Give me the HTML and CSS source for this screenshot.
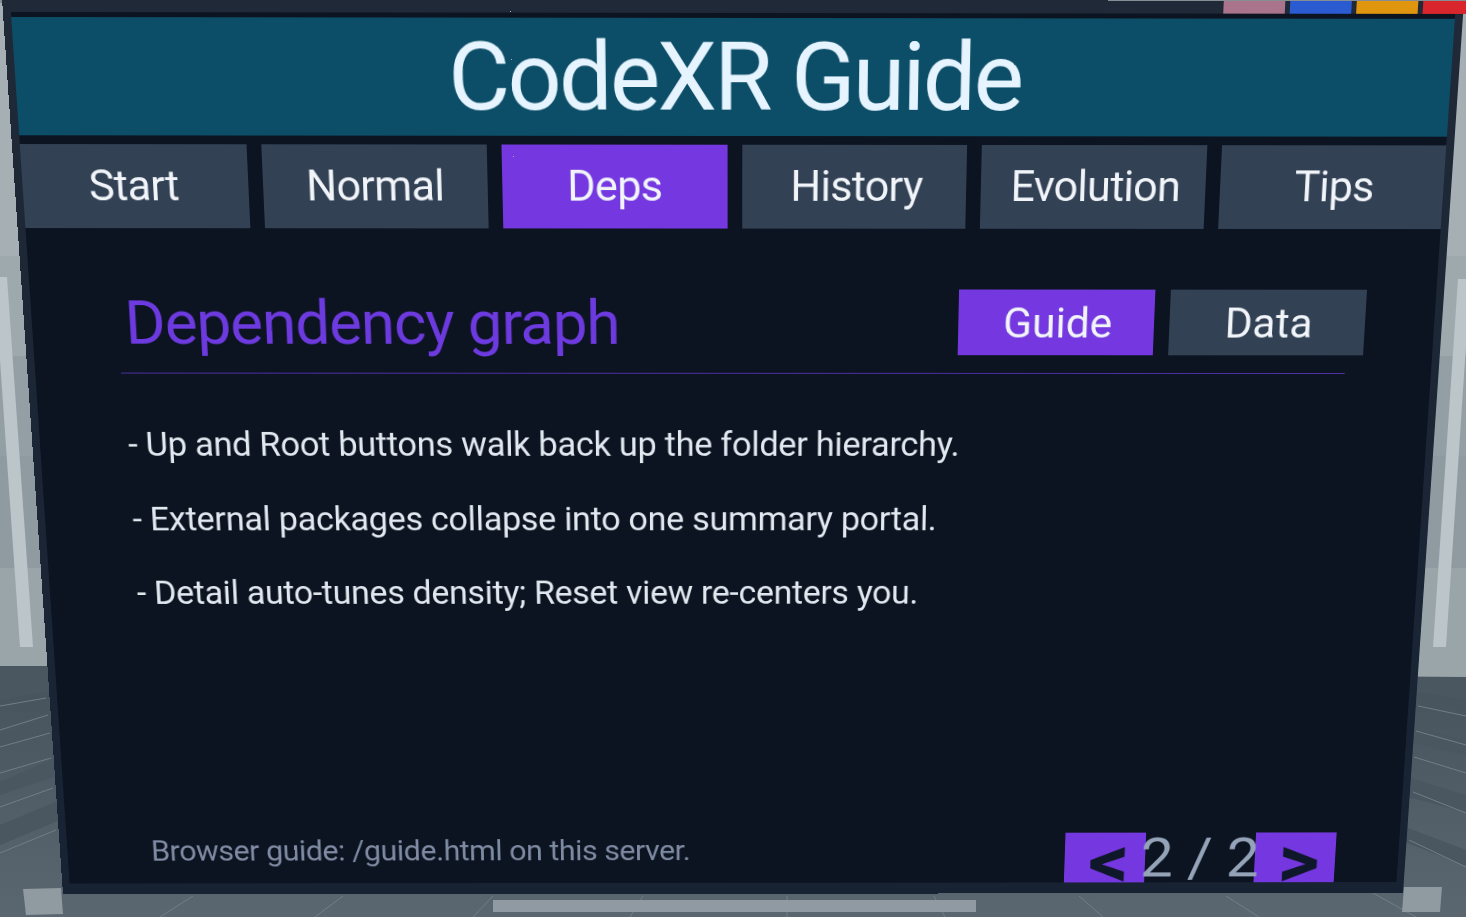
FILE: index.html
```html
<!DOCTYPE html>
<html lang="en">
<head>
<meta charset="utf-8">
<title>CodeXR Guide</title>
<link rel="stylesheet" href="styles.css">
</head>
<body>
<div class="scene">
  <svg class="backdrop" viewBox="0 0 1466 917" width="1466" height="917" aria-hidden="true">
    <defs>
      <linearGradient id="floorShade" x1="0" y1="0" x2="0" y2="1">
        <stop offset="0" stop-color="#46525b"/>
        <stop offset="1" stop-color="#5a6771"/>
      </linearGradient>
    </defs>
    <rect class="wall-a" x="0" y="0" width="1466" height="256"/>
    <rect class="wall-b" x="0" y="256" width="1466" height="100"/>
    <rect class="wall-c" x="0" y="356" width="1466" height="100"/>
    <rect class="wall-d" x="0" y="456" width="1466" height="112"/>
    <rect class="wall-e" x="0" y="568" width="1466" height="110"/>
    <rect class="wall-top" x="0" y="0" width="1466" height="3"/>
    <polygon class="floor" points="0,666 1466,677 1466,917 0,917"/>
    <polygon class="floor-dark" points="0,666 60,666 60,690 0,700"/>
    <polygon class="floor-dark" points="0,735 60,718 60,730 0,748"/>
    <polygon class="floor-dark" points="0,782 60,756 60,775 0,795"/>
    <polygon class="floor-dark" points="0,825 60,800 60,820 0,845"/>
    <polygon class="floor-dark" points="1400,677 1466,677 1466,700 1400,690"/>
    <polygon class="floor-dark" points="1400,725 1466,740 1466,755 1400,740"/>
    <polygon class="floor-dark" points="1400,775 1466,795 1466,812 1400,795"/>
    <polygon class="floor-dark" points="1400,825 1466,850 1466,866 1400,840"/>
    <g class="tile">
      <path d="M0 853L56 830M0 807L53 788M0 773L51 758M0 747L50 733M0 730L48 715M0 706L46 698M25 912L62 890"/>
      <path d="M1409 840L1466 867M1413 792L1466 813M1414 757L1466 773M1416 731L1466 745M1418 706L1466 716"/>
      <path d="M193 896L160 917M343 896L315 917M493 896L473 917M643 896L630 917M787 896L787 917M934 896L945 917M1079 896L1103 917M1226 896L1259 917M1373 893L1416 917"/>
    </g>
    <polygon class="wall-bar" points="0,277 7,277 33,647 20,647 0,360"/>
    <polygon class="wall-bar" points="1458,279 1466,279 1466,345 1446,647 1433,647"/>
    <polygon class="handle" points="23,889 61,888 63,914 26,915"/>
    <polygon class="handle" points="1404,887 1442,887 1440,912 1402,912"/>
    <rect class="grab-bar" x="493" y="900" width="483" height="12"/>
  </svg>

  <main class="panel">
    <div class="controls">
      <span class="control control-pink"></span>
      <span class="control control-blue"></span>
      <span class="control control-amber"></span>
      <span class="control control-red"></span>
    </div>
    <div class="surface">
      <header class="banner">CodeXR Guide</header>
      <nav class="tabs">
        <a class="tab">Start</a>
        <a class="tab">Normal</a>
        <a class="tab is-active">Deps</a>
        <a class="tab">History</a>
        <a class="tab">Evolution</a>
        <a class="tab">Tips</a>
      </nav>
      <section class="content">
        <div class="content-head">
          <h1 class="content-title">Dependency graph</h1>
          <div class="toggle">
            <a class="toggle-btn is-active">Guide</a>
            <a class="toggle-btn">Data</a>
          </div>
        </div>
        <ul class="notes">
          <li>- Up and Root buttons walk back up the folder hierarchy.</li>
          <li>- External packages collapse into one summary portal.</li>
          <li>- Detail auto-tunes density; Reset view re-centers you.</li>
        </ul>
        <footer class="foot">
          <p class="foot-note">Browser guide: /guide.html on this server.</p>
          <div class="pager">
            <a class="pager-btn">&lt;</a>
            <span class="pager-count">2 / 2</span>
            <a class="pager-btn">&gt;</a>
          </div>
        </footer>
      </section>
    </div>
  </main>
</div>
</body>
</html>
```
FILE: styles.css
```css
* { box-sizing: border-box; }
html, body { margin: 0; padding: 0; background: #4f5c66; }
.scene { position: relative; width: 1466px; height: 917px; overflow: hidden; font-family: Roboto, "Liberation Sans", sans-serif; }
.backdrop { position: absolute; inset: 0; display: block; }
.wall-a { fill: #a6b0b4; }
.wall-b { fill: #9ea9ae; }
.wall-c { fill: #949fa5; }
.wall-d { fill: #8f9ba1; }
.wall-e { fill: #9aa5aa; }
.wall-top { fill: #858d95; }
.floor { fill: url(#floorShade); }
.floor-dark { fill: #4a5660; }
.tile path { stroke: #717e87; stroke-width: 1; fill: none; }
.wall-bar { fill: #bcc5c9; }
.handle { fill: #8f9aa1; }
.grab-bar { fill: #8f9aa2; }

.panel {
  position: absolute;
  left: 0;
  top: 0;
  width: 1468px;
  height: 977px;
  padding: 0 8px 13px;
  display: flex;
  flex-direction: column;
  background: linear-gradient(#1f2937, #172233);
  transform-origin: 0 0;
  transform: matrix3d(0.99998, 0.001365, 0, 0.000002777,
                      0.06832, 1.0001, 0, 0.00009338,
                      0, 0, 1, 0,
                      2, -1, 0, 1);
}
.controls { display: flex; justify-content: flex-end; gap: 5px; height: 13px; margin-right: -29px; flex: none; }
.control { width: 62px; }
.control-pink { background: #a9748c; }
.control-blue { background: #2a5bd0; }
.control-amber { background: #e0950f; }
.control-red { background: #d8262c; }

.surface { flex: 1; min-height: 0; display: flex; flex-direction: column; padding-top: 5px; background: #0c1421; overflow: hidden; }
.banner { flex: none; height: 120px; padding-left: 1px; display: flex; align-items: center; justify-content: center; background: #0c4e68; color: #e6f4ff; font-size: 96px; letter-spacing: -2.7px; line-height: 1; }
.tabs { flex: none; display: flex; gap: 15px; height: 87px; margin-top: 9px; }
.tab { flex: 0 0 229.5px; display: flex; align-items: center; justify-content: center; padding-bottom: 2px; background: #334155; color: #f1f5f9; font-size: 44px; letter-spacing: -0.7px; }
.tab:first-child { padding-right: 3px; }
.tab:nth-child(n+4) { padding-left: 5px; }
.tab.is-active { background: #7538e0; }

.content { flex: 1; min-height: 0; display: flex; flex-direction: column; padding: 64px 90px 0 89px; }
.content-head { flex: none; display: flex; justify-content: space-between; align-items: center; padding-bottom: 19px; border-bottom: 1px solid #5230ad; }
.content-title { height: 70px; margin: 0; padding: 2px 0 0 7px; font-size: 64px; font-weight: 400; line-height: 70px; letter-spacing: -1.1px; color: #6d3adf; }
.toggle { display: flex; gap: 16px; margin-right: -18px; }
.toggle-btn { width: 203px; height: 70px; padding: 2px 0 0 3px; display: flex; align-items: center; justify-content: center; background: #334155; color: #f1f5f9; font-size: 44px; }
.toggle-btn.is-active { background: #7538e0; }

.notes { flex: none; list-style: none; margin: 36px 0 0; padding: 0 0 0 3px; color: #e2e8f0; font-size: 36px; letter-spacing: -0.33px; line-height: 82px; }

.foot { flex: none; margin-top: auto; height: 59px; display: flex; justify-content: space-between; align-items: flex-start; }
.foot-note { margin: 0; padding: 0 0 0 2px; font-size: 33px; letter-spacing: -0.5px; line-height: 42px; color: #7f8ba3; }
.pager { display: flex; height: 59px; margin-right: -21px; }
.pager-btn { width: 88px; height: 59px; display: flex; align-items: center; justify-content: center; padding: 8px 0 0 9px; background: #7538e0; color: #0f172a; font-size: 88px; font-weight: 700; line-height: 59px; }
.pager-count { position: relative; width: 120px; padding-top: 1px; display: flex; justify-content: center; white-space: nowrap; color: #94a3b8; font-size: 64px; line-height: 59px; }
```
